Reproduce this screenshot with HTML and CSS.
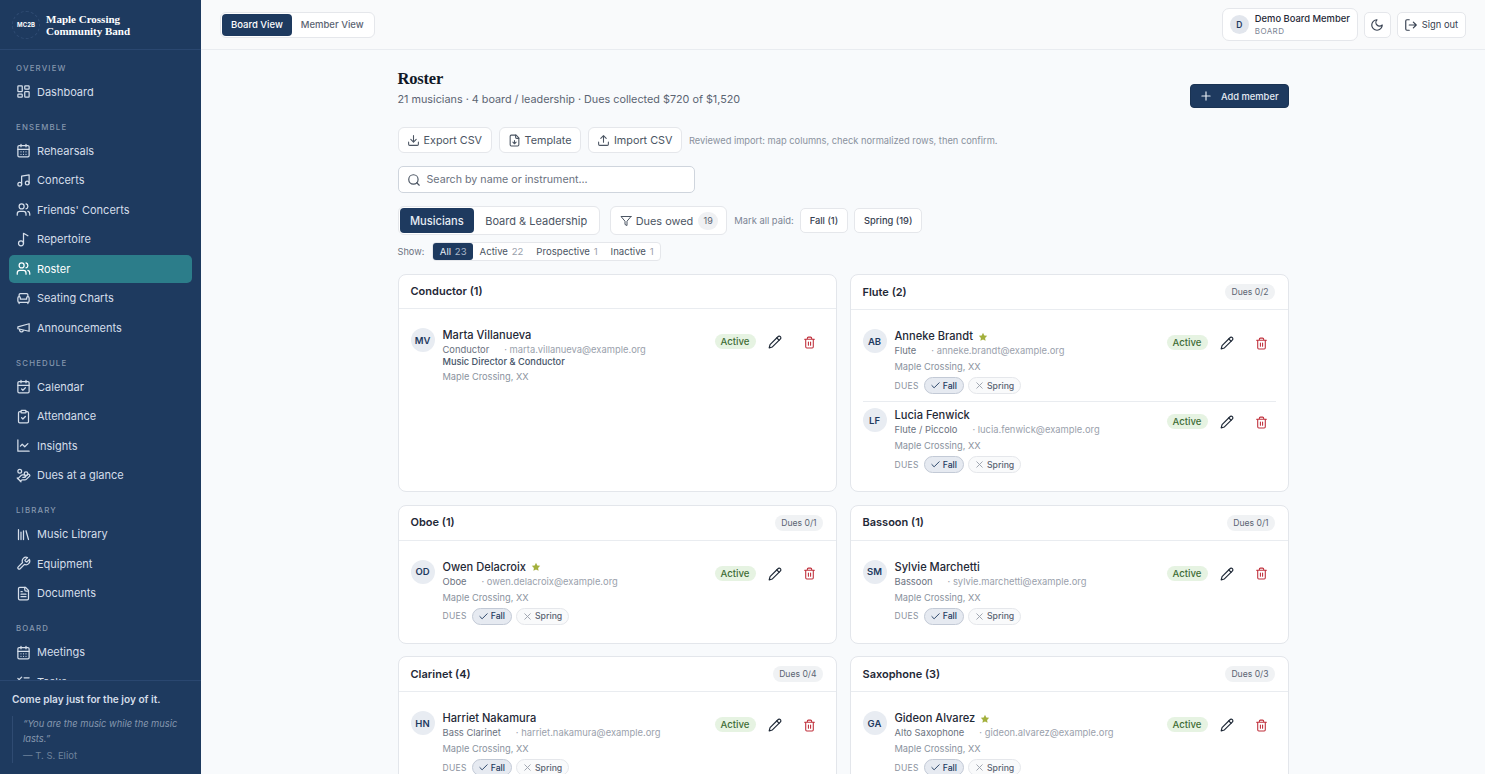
FILE: index.html
```html
<!DOCTYPE html>
<html lang="en">
<head>
    <meta charset="UTF-8">
    <meta name="viewport" content="width=device-width, initial-scale=1.0">
    <title>Roster - Maple Crossing Community Band</title>
    <link rel="stylesheet" href="styles.css">
</head>
<body>
    <svg class="sprite" xmlns="http://www.w3.org/2000/svg">
        <symbol id="i-dashboard" viewBox="0 0 24 24"><rect x="3" y="3" width="7" height="9" rx="1"/><rect x="14" y="3" width="7" height="5" rx="1"/><rect x="14" y="12" width="7" height="9" rx="1"/><rect x="3" y="16" width="7" height="5" rx="1"/></symbol>
        <symbol id="i-calendar" viewBox="0 0 24 24"><path d="M8 2v4M16 2v4"/><rect x="3" y="4" width="18" height="18" rx="2"/><path d="M3 10h18M8 14h.01M12 14h.01M16 14h.01M8 18h.01M12 18h.01M16 18h.01"/></symbol>
        <symbol id="i-music" viewBox="0 0 24 24"><path d="M9 18V5l12-2v13"/><circle cx="6" cy="18" r="3"/><circle cx="18" cy="16" r="3"/></symbol>
        <symbol id="i-users" viewBox="0 0 24 24"><path d="M16 21v-2a4 4 0 0 0-4-4H6a4 4 0 0 0-4 4v2"/><circle cx="9" cy="7" r="4"/><path d="M22 21v-2a4 4 0 0 0-3-3.87M16 3.13a4 4 0 0 1 0 7.75"/></symbol>
        <symbol id="i-note" viewBox="0 0 24 24"><circle cx="8" cy="18" r="4"/><path d="M12 18V2l7 4"/></symbol>
        <symbol id="i-seat" viewBox="0 0 24 24"><path d="M19 9V6a2 2 0 0 0-2-2H7a2 2 0 0 0-2 2v3"/><path d="M3 16a2 2 0 0 0 2 2h14a2 2 0 0 0 2-2v-5a2 2 0 0 0-4 0v2H7v-2a2 2 0 0 0-4 0Z"/><path d="M5 18v2M19 18v2"/></symbol>
        <symbol id="i-megaphone" viewBox="0 0 24 24"><path d="m3 11 18-5v12L3 14v-3z"/><path d="M11.6 16.8a3 3 0 1 1-5.8-1.6"/></symbol>
        <symbol id="i-calcheck" viewBox="0 0 24 24"><path d="M8 2v4M16 2v4"/><rect x="3" y="4" width="18" height="18" rx="2"/><path d="M3 10h18M9 16l2 2 4-4"/></symbol>
        <symbol id="i-clipboard" viewBox="0 0 24 24"><rect x="8" y="2" width="8" height="4" rx="1"/><path d="M16 4h2a2 2 0 0 1 2 2v14a2 2 0 0 1-2 2H6a2 2 0 0 1-2-2V6a2 2 0 0 1 2-2h2"/><path d="m9 14 2 2 4-4"/></symbol>
        <symbol id="i-chart" viewBox="0 0 24 24"><path d="M3 3v18h18"/><path d="m19 9-5 5-4-4-3 3"/></symbol>
        <symbol id="i-coins" viewBox="0 0 24 24"><path d="M11 15h2a2 2 0 1 0 0-4h-3c-.6 0-1.1.2-1.4.6L3 17"/><path d="m7 21 1.6-1.4c.3-.4.8-.6 1.4-.6h4c1.1 0 2.1-.4 2.8-1.2l4.6-4.4a2 2 0 0 0-2.75-2.91l-4.2 3.9"/><path d="m2 16 6 6"/><circle cx="16" cy="9" r="2.9"/><circle cx="6" cy="5" r="3"/></symbol>
        <symbol id="i-library" viewBox="0 0 24 24"><path d="m16 6 4 14M12 6v14M8 8v12M4 4v16"/></symbol>
        <symbol id="i-wrench" viewBox="0 0 24 24"><path d="M14.7 6.3a1 1 0 0 0 0 1.4l1.6 1.6a1 1 0 0 0 1.4 0l3.77-3.77a6 6 0 0 1-7.94 7.94l-6.91 6.91a2.12 2.12 0 0 1-3-3l6.91-6.91a6 6 0 0 1 7.94-7.94l-3.76 3.76z"/></symbol>
        <symbol id="i-file" viewBox="0 0 24 24"><path d="M15 2H6a2 2 0 0 0-2 2v16a2 2 0 0 0 2 2h12a2 2 0 0 0 2-2V7Z"/><path d="M14 2v4a2 2 0 0 0 2 2h4M10 9H8M16 13H8M16 17H8"/></symbol>
        <symbol id="i-filedown" viewBox="0 0 24 24"><path d="M15 2H6a2 2 0 0 0-2 2v16a2 2 0 0 0 2 2h12a2 2 0 0 0 2-2V7Z"/><path d="M14 2v4a2 2 0 0 0 2 2h4M12 18v-6M9 15l3 3 3-3"/></symbol>
        <symbol id="i-tasks" viewBox="0 0 24 24"><path d="m3 17 2 2 4-4M3 7l2 2 4-4M13 6h8M13 12h8M13 18h8"/></symbol>
        <symbol id="i-moon" viewBox="0 0 24 24"><path d="M12 3a6 6 0 0 0 9 9 9 9 0 1 1-9-9Z"/></symbol>
        <symbol id="i-logout" viewBox="0 0 24 24"><path d="M9 21H5a2 2 0 0 1-2-2V5a2 2 0 0 1 2-2h4M16 17l5-5-5-5M21 12H9"/></symbol>
        <symbol id="i-plus" viewBox="0 0 24 24"><path d="M5 12h14M12 5v14"/></symbol>
        <symbol id="i-download" viewBox="0 0 24 24"><path d="M21 15v4a2 2 0 0 1-2 2H5a2 2 0 0 1-2-2v-4M7 10l5 5 5-5M12 15V3"/></symbol>
        <symbol id="i-upload" viewBox="0 0 24 24"><path d="M21 15v4a2 2 0 0 1-2 2H5a2 2 0 0 1-2-2v-4M17 8l-5-5-5 5M12 3v12"/></symbol>
        <symbol id="i-search" viewBox="0 0 24 24"><circle cx="11" cy="11" r="8"/><path d="m21 21-4.3-4.3"/></symbol>
        <symbol id="i-filter" viewBox="0 0 24 24"><path d="M22 3H2l8 9.46V19l4 2v-8.54L22 3z"/></symbol>
        <symbol id="i-pencil" viewBox="0 0 24 24"><path d="M17 3a2.85 2.83 0 1 1 4 4L7.5 20.5 2 22l1.5-5.5Z"/><path d="m15 5 4 4"/></symbol>
        <symbol id="i-trash" viewBox="0 0 24 24"><path d="M3 6h18M19 6v14c0 1-1 2-2 2H7c-1 0-2-1-2-2V6M8 6V4c0-1 1-2 2-2h4c1 0 2 1 2 2v2M10 11v6M14 11v6"/></symbol>
        <symbol id="i-star" viewBox="0 0 24 24"><path d="M12 2l3.09 6.26L22 9.27l-5 4.87 1.18 6.88L12 17.77l-6.18 3.25L7 14.14 2 9.27l6.91-1.01L12 2z"/></symbol>
        <symbol id="i-check" viewBox="0 0 24 24"><path d="M20 6 9 17l-5-5"/></symbol>
        <symbol id="i-x" viewBox="0 0 24 24"><path d="M18 6 6 18M6 6l12 12"/></symbol>
    </svg>

    <aside class="sidebar">
        <div class="brand">
            <div class="brand-logo">MC2B</div>
            <div class="brand-name">Maple Crossing<br>Community Band</div>
        </div>
        <nav class="nav">
            <div class="nav-label">Overview</div>
            <a class="nav-item"><svg class="icon"><use href="#i-dashboard"/></svg>Dashboard</a>
            <div class="nav-label">Ensemble</div>
            <a class="nav-item"><svg class="icon"><use href="#i-calendar"/></svg>Rehearsals</a>
            <a class="nav-item"><svg class="icon"><use href="#i-music"/></svg>Concerts</a>
            <a class="nav-item"><svg class="icon"><use href="#i-users"/></svg>Friends' Concerts</a>
            <a class="nav-item"><svg class="icon"><use href="#i-note"/></svg>Repertoire</a>
            <a class="nav-item active"><svg class="icon"><use href="#i-users"/></svg>Roster</a>
            <a class="nav-item"><svg class="icon"><use href="#i-seat"/></svg>Seating Charts</a>
            <a class="nav-item"><svg class="icon"><use href="#i-megaphone"/></svg>Announcements</a>
            <div class="nav-label">Schedule</div>
            <a class="nav-item"><svg class="icon"><use href="#i-calcheck"/></svg>Calendar</a>
            <a class="nav-item"><svg class="icon"><use href="#i-clipboard"/></svg>Attendance</a>
            <a class="nav-item"><svg class="icon"><use href="#i-chart"/></svg>Insights</a>
            <a class="nav-item"><svg class="icon"><use href="#i-coins"/></svg>Dues at a glance</a>
            <div class="nav-label">Library</div>
            <a class="nav-item"><svg class="icon"><use href="#i-library"/></svg>Music Library</a>
            <a class="nav-item"><svg class="icon"><use href="#i-wrench"/></svg>Equipment</a>
            <a class="nav-item"><svg class="icon"><use href="#i-file"/></svg>Documents</a>
            <div class="nav-label">Board</div>
            <a class="nav-item"><svg class="icon"><use href="#i-calendar"/></svg>Meetings</a>
            <a class="nav-item"><svg class="icon"><use href="#i-tasks"/></svg>Tasks</a>
        </nav>
        <div class="side-foot">
            <div class="tagline">Come play just for the joy of it.</div>
            <blockquote class="quote">
                <em>“You are the music while the music lasts.”</em>
                <span>— T. S. Eliot</span>
            </blockquote>
        </div>
    </aside>

    <div class="content">
        <header class="topbar">
            <div class="view-switch">
                <button class="view-btn on">Board View</button>
                <button class="view-btn">Member View</button>
            </div>
            <div class="top-right">
                <div class="user-chip">
                    <div class="user-avatar">D</div>
                    <div>
                        <div class="user-name">Demo Board Member</div>
                        <div class="user-role">BOARD</div>
                    </div>
                </div>
                <button class="top-btn theme"><svg class="icon"><use href="#i-moon"/></svg></button>
                <button class="top-btn"><svg class="icon"><use href="#i-logout"/></svg>Sign out</button>
            </div>
        </header>

        <main class="page">
            <div class="page-head">
                <div>
                    <h1>Roster</h1>
                    <p class="subtitle">21 musicians · 4 board / leadership · Dues collected $720 of $1,520</p>
                </div>
                <button class="add-btn"><svg class="icon"><use href="#i-plus"/></svg>Add member</button>
            </div>

            <div class="tools">
                <button class="tool-btn"><svg class="icon"><use href="#i-download"/></svg>Export CSV</button>
                <button class="tool-btn"><svg class="icon"><use href="#i-filedown"/></svg>Template</button>
                <button class="tool-btn"><svg class="icon"><use href="#i-upload"/></svg>Import CSV</button>
                <span class="tools-note">Reviewed import: map columns, check normalized rows, then confirm.</span>
            </div>

            <div class="search-row">
                <div class="search"><svg class="icon"><use href="#i-search"/></svg>Search by name or instrument...</div>
            </div>

            <div class="filters">
                <div class="tabs">
                    <button class="tab on">Musicians</button>
                    <button class="tab">Board &amp; Leadership</button>
                </div>
                <button class="owed"><svg class="icon"><use href="#i-filter"/></svg>Dues owed <span class="owed-count">19</span></button>
                <span class="mark-label">Mark all paid:</span>
                <button class="mark-btn">Fall (1)</button>
                <button class="mark-btn">Spring (19)</button>
            </div>

            <div class="show-row">
                <span class="show-label">Show:</span>
                <div class="show-group">
                    <button class="show-btn on">All <i>23</i></button>
                    <button class="show-btn">Active <i>22</i></button>
                    <button class="show-btn">Prospective <i>1</i></button>
                    <button class="show-btn">Inactive <i>1</i></button>
                </div>
            </div>

            <div class="cards">
                <section class="card">
                    <div class="card-head"><h2>Conductor (1)</h2></div>
                    <div class="card-body">
                        <div class="member">
                            <div class="avatar">MV</div>
                            <div class="info">
                                <div class="name">Marta Villanueva</div>
                                <div class="line"><span class="part">Conductor</span><span class="email">· marta.villanueva@example.org</span></div>
                                <div class="title">Music Director &amp; Conductor</div>
                                <div class="city">Maple Crossing, XX</div>
                            </div>
                            <span class="status">Active</span>
                            <button class="act"><svg class="icon"><use href="#i-pencil"/></svg></button>
                            <button class="act del"><svg class="icon"><use href="#i-trash"/></svg></button>
                        </div>
                    </div>
                </section>

                <section class="card">
                    <div class="card-head"><h2>Flute (2)</h2><span class="dues-tag">Dues 0/2</span></div>
                    <div class="card-body">
                        <div class="member">
                            <div class="avatar">AB</div>
                            <div class="info">
                                <div class="name">Anneke Brandt <svg class="star"><use href="#i-star"/></svg></div>
                                <div class="line"><span class="part">Flute</span><span class="email">· anneke.brandt@example.org</span></div>
                                <div class="city">Maple Crossing, XX</div>
                                <div class="dues">DUES
                                    <span class="pill paid"><svg class="icon"><use href="#i-check"/></svg>Fall</span>
                                    <span class="pill"><svg class="icon"><use href="#i-x"/></svg>Spring</span>
                                </div>
                            </div>
                            <span class="status">Active</span>
                            <button class="act"><svg class="icon"><use href="#i-pencil"/></svg></button>
                            <button class="act del"><svg class="icon"><use href="#i-trash"/></svg></button>
                        </div>
                        <div class="member">
                            <div class="avatar">LF</div>
                            <div class="info">
                                <div class="name">Lucia Fenwick</div>
                                <div class="line"><span class="part">Flute / Piccolo</span><span class="email">· lucia.fenwick@example.org</span></div>
                                <div class="city">Maple Crossing, XX</div>
                                <div class="dues">DUES
                                    <span class="pill paid"><svg class="icon"><use href="#i-check"/></svg>Fall</span>
                                    <span class="pill"><svg class="icon"><use href="#i-x"/></svg>Spring</span>
                                </div>
                            </div>
                            <span class="status">Active</span>
                            <button class="act"><svg class="icon"><use href="#i-pencil"/></svg></button>
                            <button class="act del"><svg class="icon"><use href="#i-trash"/></svg></button>
                        </div>
                    </div>
                </section>

                <section class="card">
                    <div class="card-head"><h2>Oboe (1)</h2><span class="dues-tag">Dues 0/1</span></div>
                    <div class="card-body">
                        <div class="member">
                            <div class="avatar">OD</div>
                            <div class="info">
                                <div class="name">Owen Delacroix <svg class="star"><use href="#i-star"/></svg></div>
                                <div class="line"><span class="part">Oboe</span><span class="email">· owen.delacroix@example.org</span></div>
                                <div class="city">Maple Crossing, XX</div>
                                <div class="dues">DUES
                                    <span class="pill paid"><svg class="icon"><use href="#i-check"/></svg>Fall</span>
                                    <span class="pill"><svg class="icon"><use href="#i-x"/></svg>Spring</span>
                                </div>
                            </div>
                            <span class="status">Active</span>
                            <button class="act"><svg class="icon"><use href="#i-pencil"/></svg></button>
                            <button class="act del"><svg class="icon"><use href="#i-trash"/></svg></button>
                        </div>
                    </div>
                </section>

                <section class="card">
                    <div class="card-head"><h2>Bassoon (1)</h2><span class="dues-tag">Dues 0/1</span></div>
                    <div class="card-body">
                        <div class="member">
                            <div class="avatar">SM</div>
                            <div class="info">
                                <div class="name">Sylvie Marchetti</div>
                                <div class="line"><span class="part">Bassoon</span><span class="email">· sylvie.marchetti@example.org</span></div>
                                <div class="city">Maple Crossing, XX</div>
                                <div class="dues">DUES
                                    <span class="pill paid"><svg class="icon"><use href="#i-check"/></svg>Fall</span>
                                    <span class="pill"><svg class="icon"><use href="#i-x"/></svg>Spring</span>
                                </div>
                            </div>
                            <span class="status">Active</span>
                            <button class="act"><svg class="icon"><use href="#i-pencil"/></svg></button>
                            <button class="act del"><svg class="icon"><use href="#i-trash"/></svg></button>
                        </div>
                    </div>
                </section>

                <section class="card">
                    <div class="card-head"><h2>Clarinet (4)</h2><span class="dues-tag">Dues 0/4</span></div>
                    <div class="card-body">
                        <div class="member">
                            <div class="avatar">HN</div>
                            <div class="info">
                                <div class="name">Harriet Nakamura</div>
                                <div class="line"><span class="part">Bass Clarinet</span><span class="email">· harriet.nakamura@example.org</span></div>
                                <div class="city">Maple Crossing, XX</div>
                                <div class="dues">DUES
                                    <span class="pill paid"><svg class="icon"><use href="#i-check"/></svg>Fall</span>
                                    <span class="pill"><svg class="icon"><use href="#i-x"/></svg>Spring</span>
                                </div>
                            </div>
                            <span class="status">Active</span>
                            <button class="act"><svg class="icon"><use href="#i-pencil"/></svg></button>
                            <button class="act del"><svg class="icon"><use href="#i-trash"/></svg></button>
                        </div>
                    </div>
                </section>

                <section class="card">
                    <div class="card-head"><h2>Saxophone (3)</h2><span class="dues-tag">Dues 0/3</span></div>
                    <div class="card-body">
                        <div class="member">
                            <div class="avatar">GA</div>
                            <div class="info">
                                <div class="name">Gideon Alvarez <svg class="star"><use href="#i-star"/></svg></div>
                                <div class="line"><span class="part">Alto Saxophone</span><span class="email">· gideon.alvarez@example.org</span></div>
                                <div class="city">Maple Crossing, XX</div>
                                <div class="dues">DUES
                                    <span class="pill paid"><svg class="icon"><use href="#i-check"/></svg>Fall</span>
                                    <span class="pill"><svg class="icon"><use href="#i-x"/></svg>Spring</span>
                                </div>
                            </div>
                            <span class="status">Active</span>
                            <button class="act"><svg class="icon"><use href="#i-pencil"/></svg></button>
                            <button class="act del"><svg class="icon"><use href="#i-trash"/></svg></button>
                        </div>
                    </div>
                </section>
            </div>
        </main>
    </div>
</body>
</html>
```

FILE: styles.css
```css
* {
    box-sizing: border-box;
}
html, body {
    height: 100%;
}
body {
    margin: 0;
    display: flex;
    height: 100vh;
    overflow: hidden;
    font-family: Inter, "Noto Sans", sans-serif;
    color: #1f2937;
    background: #f8fafc;
}
button {
    font-family: inherit;
    cursor: pointer;
}
.sprite {
    display: none;
}
.icon {
    fill: none;
    stroke: currentColor;
    stroke-width: 2;
    stroke-linecap: round;
    stroke-linejoin: round;
    flex-shrink: 0;
}

/* sidebar */
.sidebar {
    width: 201px;
    flex-shrink: 0;
    display: flex;
    flex-direction: column;
    background: #1e3a5f;
    color: #d5deea;
}
.brand {
    height: 50px;
    flex-shrink: 0;
    display: flex;
    align-items: center;
    gap: 6px;
    padding-left: 12px;
    border-bottom: 1px solid #2a4770;
}
.brand-logo {
    width: 28px;
    height: 28px;
    border-radius: 50%;
    border: 1px dashed #2f4b72;
    display: flex;
    align-items: center;
    justify-content: center;
    font-size: 6px;
    font-weight: 700;
    color: #fff;
}
.brand-name {
    font-family: "Liberation Serif", serif;
    font-size: 11px;
    font-weight: 700;
    line-height: 12px;
    color: #fff;
}
.nav {
    flex: 1;
    overflow: hidden;
    padding: 12.5px 9px 0;
}
.nav-label {
    font-size: 7.8px;
    font-weight: 500;
    letter-spacing: 1.2px;
    text-transform: uppercase;
    color: #8597ae;
    padding-left: 7px;
    line-height: 11px;
    margin: 16px 0 4px;
}
.nav-label:first-child {
    margin-top: 0;
}
.nav-item {
    display: flex;
    align-items: center;
    gap: 6.5px;
    height: 28px;
    margin-bottom: 1.5px;
    padding-left: 6.5px;
    border-radius: 5px;
    font-size: 11px;
    color: #d5deea;
}
.nav-item .icon {
    width: 15px;
    height: 15px;
}
.nav-item.active {
    background: #2c7d8a;
    color: #fff;
}
.side-foot {
    height: 94px;
    flex-shrink: 0;
    padding: 12px 12px 0;
    background: #1e3a5f;
    border-top: 1px solid #2a4770;
}
.tagline {
    font-size: 10.1px;
    font-weight: 600;
    color: #d5deea;
    margin-bottom: 11px;
}
.quote {
    margin: 0;
    padding-left: 10px;
    border-left: 1px solid #2f4b72;
    font-size: 9.3px;
    line-height: 15px;
    color: #8597ae;
}
.quote span {
    display: block;
    font-size: 9.5px;
    color: #6f839c;
    margin-top: 2px;
}

/* top bar */
.content {
    flex: 1;
    min-width: 0;
    display: flex;
    flex-direction: column;
}
.topbar {
    height: 50px;
    flex-shrink: 0;
    display: flex;
    align-items: center;
    justify-content: space-between;
    padding: 0 19px;
    border-bottom: 1px solid #e9ecf0;
    background: #f9fafb;
}
.view-switch {
    display: flex;
    padding: 1px;
    background: #fff;
    border: 1px solid #e5e7eb;
    border-radius: 6px;
}
.view-btn {
    height: 22px;
    padding: 0 9px;
    border: none;
    border-radius: 4px;
    background: none;
    font-size: 9.5px;
    font-weight: 500;
    color: #5b6472;
}
.view-btn.on {
    background: #1e3a5f;
    color: #fff;
}
.top-right {
    display: flex;
    align-items: center;
    gap: 6px;
}
.user-chip {
    display: flex;
    align-items: center;
    gap: 6px;
    height: 33px;
    padding: 0 7px;
    background: #fff;
    border: 1px solid #e5e7eb;
    border-radius: 7px;
}
.user-avatar {
    width: 19px;
    height: 19px;
    border-radius: 50%;
    background: #e2e6ed;
    color: #1e3a5f;
    display: flex;
    align-items: center;
    justify-content: center;
    font-size: 8.5px;
    font-weight: 600;
}
.user-name {
    font-size: 9.4px;
    font-weight: 500;
    line-height: 12.5px;
    color: #1f2937;
}
.user-role {
    font-size: 8px;
    line-height: 10px;
    letter-spacing: .4px;
    color: #7b8494;
}
.top-btn {
    display: flex;
    align-items: center;
    gap: 4px;
    height: 26px;
    padding: 0 7px 0 6px;
    background: #fff;
    border: 1px solid #e5e7eb;
    border-radius: 5px;
    font-size: 9.3px;
    color: #374151;
}
.top-btn .icon {
    width: 14px;
    height: 14px;
}
.top-btn.theme {
    width: 27px;
    padding: 0;
    justify-content: center;
}

/* page */
.page {
    flex: 1;
    overflow: hidden;
    padding: 18px 0 0;
}
.page > * {
    width: 891px;
    margin-left: auto;
    margin-right: auto;
}
.page-head {
    display: flex;
    justify-content: space-between;
    align-items: flex-end;
}
h1 {
    margin: 0 0 2px;
    font-family: "Liberation Serif", serif;
    font-size: 16.5px;
    line-height: 22px;
    font-weight: 700;
    letter-spacing: -.2px;
    color: #111827;
}
.subtitle {
    margin: 0;
    font-size: 10.8px;
    line-height: 16px;
    color: #5b6472;
}
.add-btn {
    display: flex;
    align-items: center;
    gap: 8px;
    height: 24px;
    padding: 0 9px 0 8px;
    background: #1e3a5f;
    color: #e6ecf4;
    border: 1px solid #1a3353;
    border-radius: 4px;
    font-size: 9.35px;
    font-weight: 500;
}
.add-btn .icon {
    width: 14px;
    height: 14px;
}
.tools {
    display: flex;
    align-items: center;
    gap: 6.5px;
    margin-top: 19px;
}
.tool-btn {
    display: flex;
    align-items: center;
    gap: 4px;
    height: 26px;
    padding: 0 9px 0 8px;
    background: #fff;
    border: 1px solid #e5e7eb;
    border-radius: 6px;
    font-size: 10.8px;
    color: #4b5563;
}
.tool-btn .icon {
    width: 13px;
    height: 13px;
}
.tools-note {
    font-size: 9.3px;
    color: #8a929e;
}
.search-row {
    margin-top: 13px;
}
.search {
    display: flex;
    align-items: center;
    gap: 6px;
    width: 297px;
    height: 27px;
    padding-left: 8px;
    background: #fff;
    border: 1px solid #cfd5dd;
    border-radius: 5px;
    font-size: 10.7px;
    color: #6b7280;
}
.search .icon {
    width: 14px;
    height: 14px;
    color: #4b5563;
}
.filters {
    display: flex;
    align-items: center;
    margin-top: 13px;
}
.tabs {
    display: flex;
    padding: 1px;
    background: #fff;
    border: 1px solid #e5e7eb;
    border-radius: 6px;
    margin-right: 9.5px;
}
.tab {
    height: 25px;
    padding: 0 11px;
    border: none;
    border-radius: 4px;
    background: none;
    font-size: 11px;
    color: #4b5563;
}
.tab.on {
    background: #1e3a5f;
    color: #e6ecf4;
    font-weight: 500;
    font-size: 11.1px;
    padding: 0 10.5px;
}
.owed {
    display: flex;
    align-items: center;
    gap: 4px;
    height: 29px;
    padding: 0 8px 0 9px;
    background: #fff;
    border: 1px solid #e5e7eb;
    border-radius: 6px;
    font-size: 10.9px;
    color: #4b5563;
    margin-right: 7px;
}
.owed .icon {
    width: 12px;
    height: 12px;
}
.owed-count {
    display: flex;
    align-items: center;
    justify-content: center;
    width: 20px;
    height: 18px;
    margin-left: 1px;
    border-radius: 9px;
    background: #f0f1f3;
    font-size: 9px;
    color: #5b6472;
}
.mark-label {
    font-size: 9.4px;
    color: #7b8494;
    margin-right: 6px;
}
.mark-btn {
    height: 25px;
    padding: 0 9px;
    margin-right: 6px;
    background: #fff;
    border: 1px solid #e5e7eb;
    border-radius: 5px;
    font-size: 9.3px;
    font-weight: 500;
    color: #374151;
}
.show-row {
    display: flex;
    align-items: center;
    gap: 8px;
    margin-top: 7px;
}
.show-label {
    font-size: 9.2px;
    color: #6b7280;
}
.show-group {
    display: flex;
    background: #fff;
    border: 1px solid #e5e7eb;
    border-radius: 4px;
    height: 19px;
    align-items: center;
}
.show-btn {
    height: 17px;
    padding: 0 6.5px;
    border: none;
    border-radius: 3px;
    background: none;
    font-size: 9.6px;
    color: #4b5563;
}
.show-btn i {
    font-style: normal;
    margin-left: 1px;
    color: #9aa1ac;
}
.show-btn.on {
    background: #1e3a5f;
    color: #e6ecf4;
}
.show-btn.on i {
    color: #aab8ca;
}

/* cards */
.cards {
    display: grid;
    grid-template-columns: 1fr 1fr;
    gap: 12.5px 13px;
    margin-top: 13px;
}
.card {
    background: #fff;
    border: 1px solid #e3e6eb;
    border-radius: 8px;
}
.card-head {
    display: flex;
    align-items: center;
    justify-content: space-between;
    padding: 9px 13px 9px 12px;
    border-bottom: 1px solid #e9ecf0;
}
h2 {
    margin: 0;
    font-size: 11px;
    line-height: 15px;
    font-weight: 600;
    color: #1f2937;
}
.dues-tag {
    padding: 0 6px;
    line-height: 16px;
    border-radius: 8px;
    background: #f0f2f4;
    font-size: 8.6px;
    color: #5b6472;
}
.card-body {
    padding: 7px 12px 11px;
}
.member {
    display: flex;
    align-items: flex-start;
    padding: 12px 0 7px;
}
.member + .member {
    border-top: 1px solid #e9ecf0;
    padding-top: 6px;
}
.avatar {
    width: 24px;
    height: 24px;
    flex-shrink: 0;
    margin-right: 8px;
    border-radius: 50%;
    background: #e8ecf2;
    color: #1e3a5f;
    display: flex;
    align-items: center;
    justify-content: center;
    font-size: 9.5px;
    font-weight: 600;
}
.info {
    flex: 1;
    min-width: 0;
}
.name {
    display: flex;
    align-items: center;
    gap: 5px;
    font-size: 11.1px;
    line-height: 15px;
    font-weight: 500;
    color: #1f2937;
}
.star {
    width: 10px;
    height: 10px;
    fill: #a3b03c;
}
.line {
    display: flex;
    gap: 15px;
    font-size: 9.4px;
    line-height: 13px;
    color: #6b7280;
}
.email {
    color: #9aa1ac;
}
.title {
    font-size: 9.25px;
    line-height: 12px;
    font-weight: 500;
    color: #475569;
}
.city {
    font-size: 9.25px;
    line-height: 13px;
    margin-top: 3px;
    color: #8a929e;
}
.title + .city {
    margin-top: 2px;
}
.dues {
    display: flex;
    align-items: center;
    gap: 4px;
    margin-top: 4px;
    font-size: 8.5px;
    letter-spacing: .3px;
    color: #8a929e;
}
.pill {
    display: flex;
    align-items: center;
    gap: 2px;
    height: 17px;
    padding: 0 6px 0 5px;
    border: 1px solid #e5e7eb;
    border-radius: 9px;
    background: #f9fafb;
    color: #5b6472;
    font-size: 8.7px;
    font-weight: 500;
    letter-spacing: 0;
}
.pill.paid {
    margin-left: 1px;
    background: #e6eaf1;
    border-color: #c3cad6;
    color: #1e3a5f;
}
.pill .icon {
    width: 11px;
    height: 11px;
    color: #9aa1ac;
}
.pill.paid .icon {
    color: #1e3a5f;
}
.status {
    margin: 6px 5px 0 0;
    padding: 0 6px;
    line-height: 15px;
    border-radius: 8px;
    background: #e6f3e2;
    color: #3d6b35;
    font-size: 9.6px;
    font-weight: 500;
}
.act {
    width: 24px;
    height: 24px;
    margin: 2px 0 0 2px;
    padding: 0;
    border: none;
    background: none;
    display: flex;
    align-items: center;
    justify-content: center;
    color: #1f2937;
}
.act + .act {
    margin-left: 11px;
    margin-right: 2px;
}
.act .icon {
    width: 14px;
    height: 14px;
}
.act.del {
    color: #c0303c;
}
.act.del .icon {
    width: 13px;
    height: 13px;
}
```
